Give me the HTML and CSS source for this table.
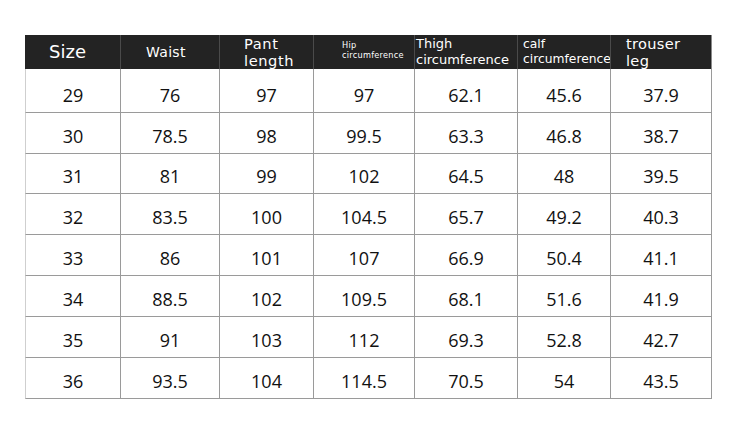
FILE: index.html
```html
<!DOCTYPE html>
<html>
<head>
<meta charset="utf-8">
<link rel="stylesheet" href="styles.css">
</head>
<body>
<div class="sheet">
  <div class="chart">
    <div class="hd hd-size"><span>Size</span></div>
    <div class="hd hd-waist"><span>Waist</span></div>
    <div class="hd hd-pant"><span>Pant</span><span>length</span></div>
    <div class="hd hd-hip"><span>Hip</span><span>circumference</span></div>
    <div class="hd hd-thigh"><span>Thigh</span><span>circumference</span></div>
    <div class="hd hd-calf"><span>calf</span><span>circumference</span></div>
    <div class="hd hd-leg"><span>trouser</span><span>leg</span></div>

    <div class="c first r1">29</div><div class="c r1">76</div><div class="c r1">97</div><div class="c r1">97</div><div class="c r1">62.1</div><div class="c r1">45.6</div><div class="c r1">37.9</div>
    <div class="c first">30</div><div class="c">78.5</div><div class="c">98</div><div class="c">99.5</div><div class="c">63.3</div><div class="c">46.8</div><div class="c">38.7</div>
    <div class="c first">31</div><div class="c">81</div><div class="c">99</div><div class="c">102</div><div class="c">64.5</div><div class="c">48</div><div class="c">39.5</div>
    <div class="c first">32</div><div class="c">83.5</div><div class="c">100</div><div class="c">104.5</div><div class="c">65.7</div><div class="c">49.2</div><div class="c">40.3</div>
    <div class="c first">33</div><div class="c">86</div><div class="c">101</div><div class="c">107</div><div class="c">66.9</div><div class="c">50.4</div><div class="c">41.1</div>
    <div class="c first">34</div><div class="c">88.5</div><div class="c">102</div><div class="c">109.5</div><div class="c">68.1</div><div class="c">51.6</div><div class="c">41.9</div>
    <div class="c first">35</div><div class="c">91</div><div class="c">103</div><div class="c">112</div><div class="c">69.3</div><div class="c">52.8</div><div class="c">42.7</div>
    <div class="c first">36</div><div class="c">93.5</div><div class="c">104</div><div class="c">114.5</div><div class="c">70.5</div><div class="c">54</div><div class="c">43.5</div>
  </div>
</div>
</body>
</html>
```

FILE: styles.css
```css
html, body {
  margin: 0;
  padding: 0;
  background: #ffffff;
}

.sheet {
  width: 749px;
  height: 436px;
  padding: 35px 0 0 25px;
  box-sizing: border-box;
}

.chart {
  display: grid;
  grid-template-columns: 96px 99px 94px 101px 103px 93px 101px;
  grid-template-rows: 34px 44px 41px 40px 41px 41px 41px 41px 41px;
  width: 728px;
}

.hd {
  background: #232323;
  color: #ffffff;
  font-family: "DejaVu Sans", Verdana, sans-serif;
  border-right: 1px solid #4a4a4a;
  box-sizing: border-box;
  overflow: hidden;
  display: flex;
  flex-direction: column;
  white-space: nowrap;
}

.hd-size {
  font-size: 18px;
  padding: 4px 0 0 24px;
  line-height: 26px;
}

.hd-waist {
  font-size: 14px;
  padding: 6px 0 0 25px;
  line-height: 22px;
  letter-spacing: 0.3px;
}

.hd-pant {
  font-size: 14.6px;
  line-height: 17px;
  padding: 0 0 0 24px;
  letter-spacing: 0.6px;
}

.hd-hip {
  font-size: 8.2px;
  line-height: 10px;
  padding: 5px 0 0 28px;
  letter-spacing: 0.25px;
}

.hd-thigh {
  font-size: 13px;
  line-height: 16px;
  padding: 1px 0 0 1px;
}

.hd-calf {
  font-size: 12.3px;
  line-height: 15px;
  padding: 2px 0 0 5px;
}

.hd-leg {
  font-size: 14.6px;
  line-height: 17px;
  padding: 0 0 0 15px;
  letter-spacing: 0.3px;
  border-right: 1px solid #8a8a8a;
}

.c {
  font-family: "Open Sans", "Liberation Sans", sans-serif;
  font-size: 18px;
  color: #111111;
  border-right: 1px solid #9a9a9a;
  border-bottom: 1px solid #9a9a9a;
  box-sizing: border-box;
  display: flex;
  align-items: center;
  justify-content: center;
  padding-top: 5px;
}

.c.first {
  border-left: 1px solid #cfcfcf;
}

.c.r1 {
  padding-top: 9px;
}
```
